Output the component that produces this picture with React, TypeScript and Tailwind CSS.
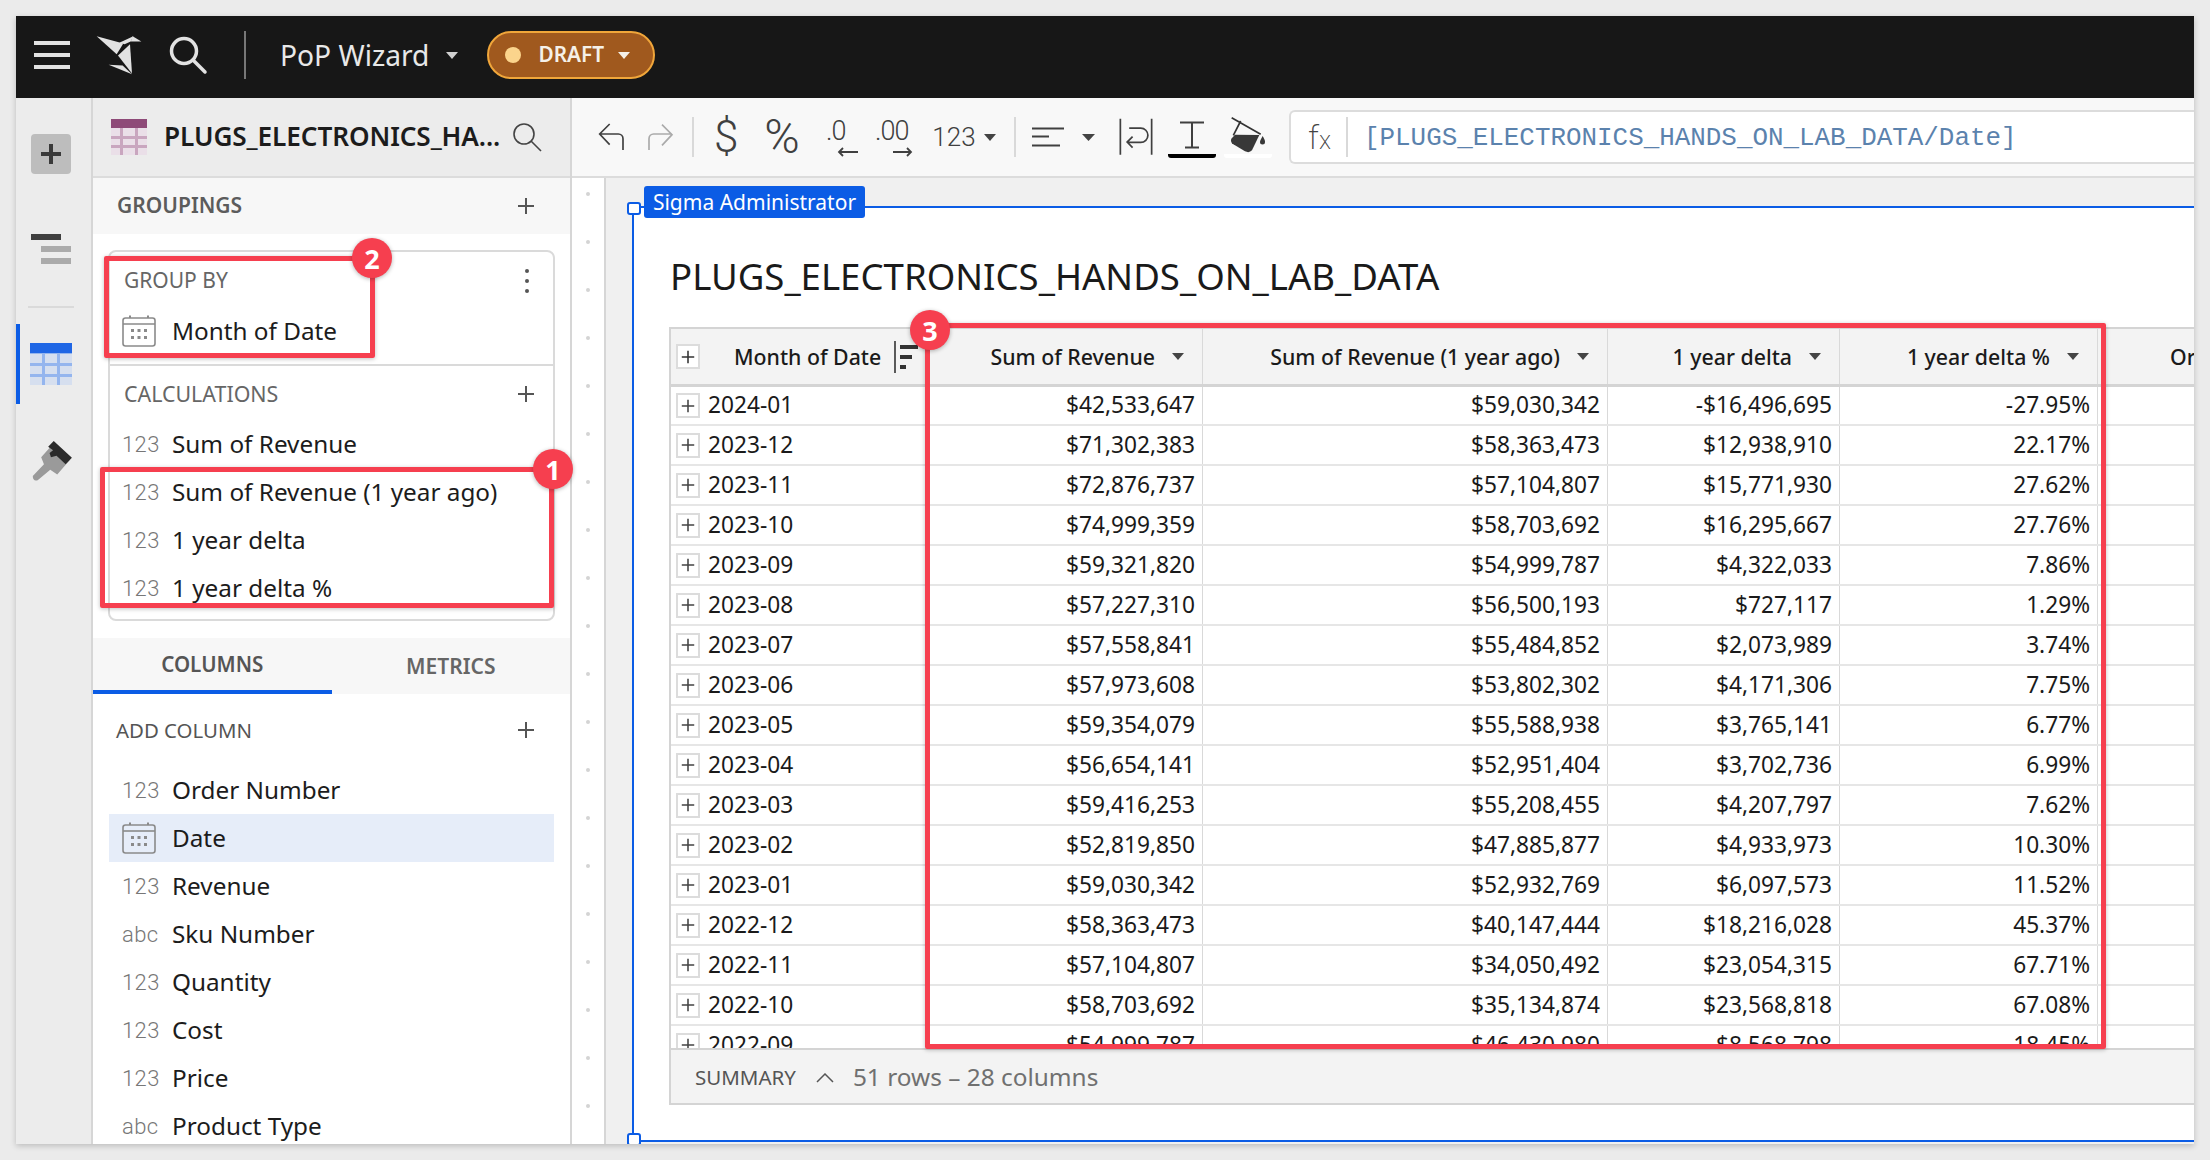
import React from "react";

const FONT = "[font-family:'Noto_Sans',sans-serif]";

const rows: [string, string, string, string, string][] = [
  ["2024-01", "$42,533,647", "$59,030,342", "-$16,496,695", "-27.95%"],
  ["2023-12", "$71,302,383", "$58,363,473", "$12,938,910", "22.17%"],
  ["2023-11", "$72,876,737", "$57,104,807", "$15,771,930", "27.62%"],
  ["2023-10", "$74,999,359", "$58,703,692", "$16,295,667", "27.76%"],
  ["2023-09", "$59,321,820", "$54,999,787", "$4,322,033", "7.86%"],
  ["2023-08", "$57,227,310", "$56,500,193", "$727,117", "1.29%"],
  ["2023-07", "$57,558,841", "$55,484,852", "$2,073,989", "3.74%"],
  ["2023-06", "$57,973,608", "$53,802,302", "$4,171,306", "7.75%"],
  ["2023-05", "$59,354,079", "$55,588,938", "$3,765,141", "6.77%"],
  ["2023-04", "$56,654,141", "$52,951,404", "$3,702,736", "6.99%"],
  ["2023-03", "$59,416,253", "$55,208,455", "$4,207,797", "7.62%"],
  ["2023-02", "$52,819,850", "$47,885,877", "$4,933,973", "10.30%"],
  ["2023-01", "$59,030,342", "$52,932,769", "$6,097,573", "11.52%"],
  ["2022-12", "$58,363,473", "$40,147,444", "$18,216,028", "45.37%"],
  ["2022-11", "$57,104,807", "$34,050,492", "$23,054,315", "67.71%"],
  ["2022-10", "$58,703,692", "$35,134,874", "$23,568,818", "67.08%"],
  ["2022-09", "$54,999,787", "$46,430,980", "$8,568,798", "18.45%"],
];

function Plus({ size = 18, color = "#444" }: { size?: number; color?: string }) {
  return (
    <svg width={size} height={size} viewBox="0 0 18 18" className="shrink-0">
      <path d="M9 1V17M1 9H17" stroke={color} strokeWidth="2" fill="none" />
    </svg>
  );
}

function Caret({ w = 12, h = 7, color = "#444" }: { w?: number; h?: number; color?: string }) {
  return (
    <svg width={w} height={h} viewBox="0 0 12 7" className="shrink-0" preserveAspectRatio="none">
      <path d="M0 0H12L6 7Z" fill={color} />
    </svg>
  );
}

function Calendar() {
  return (
    <svg width="34" height="32" viewBox="0 0 34 32" className="shrink-0">
      <rect x="1" y="3" width="32" height="28" rx="2.5" fill="none" stroke="#8a8a8a" strokeWidth="1.6" />
      <path d="M1 9H33" stroke="#8a8a8a" strokeWidth="1.6" />
      <path d="M8 0.5V3M26 0.5V3" stroke="#8a8a8a" strokeWidth="2" />
      <g fill="#8a8a8a">
        <rect x="9" y="14" width="3" height="3" />
        <rect x="15.5" y="14" width="3" height="3" />
        <rect x="22" y="14" width="3" height="3" />
        <rect x="9" y="21" width="3" height="3" />
        <rect x="15.5" y="21" width="3" height="3" />
        <rect x="22" y="21" width="3" height="3" />
      </g>
    </svg>
  );
}

function FieldRow({ kind, label, active, icon }: { kind?: string; label: string; active?: boolean; icon?: boolean }) {
  return (
    <div className={`flex h-[48px] shrink-0 items-center pl-[13px] ${active ? "bg-[#e6edf9]" : ""}`}>
      <div className="flex w-[50px] shrink-0 items-center">
        {icon ? (
          <Calendar />
        ) : (
          <span className="font-['Roboto'] text-[22px] font-light tracking-[0.4px] text-[#777]">{kind}</span>
        )}
      </div>
      <span className="text-[24.3px] whitespace-nowrap text-[#1c1c1c]">{label}</span>
    </div>
  );
}

function RedBox({ className }: { className: string }) {
  return <div className={`absolute rounded-[2px] border-[5px] border-[#f63f4f] shadow-[0_1px_4px_rgba(0,0,0,0.25)] ${className}`} />;
}

function RedBadge({ n, className }: { n: number; className: string }) {
  return (
    <div
      className={`absolute flex h-[40px] w-[40px] items-center justify-center rounded-full bg-[#f63f4f] text-[27px] leading-none font-bold text-white shadow-[0_1px_4px_rgba(0,0,0,0.3)] ${className}`}
    >
      {n}
    </div>
  );
}

function Row({ r, first }: { r: string[]; first: boolean }) {
  return (
    <div className={`flex shrink-0 border-b-2 border-[#e6e6e6] text-[22.7px] text-[#1a1a1a] ${first ? "h-[39px]" : "h-[40px]"}`}>
      <div className="flex w-[256px] shrink-0 items-center pl-[5px]">
        <div className="flex h-[25px] w-[24px] shrink-0 items-center justify-center border-2 border-[#dcdcdc]">
          <Plus size={14} />
        </div>
        <span className="ml-[8px]">{r[0]}</span>
      </div>
      <div className="flex w-[276px] shrink-0 items-center justify-end border-r border-[#d9d9d9] pr-[7px]">{r[1]}</div>
      <div className="flex w-[405px] shrink-0 items-center justify-end border-r border-[#d9d9d9] pr-[7px]">{r[2]}</div>
      <div className="flex w-[232px] shrink-0 items-center justify-end border-r border-[#d9d9d9] pr-[7px]">{r[3]}</div>
      <div className="flex w-[258px] shrink-0 items-center justify-end border-r border-[#d9d9d9] pr-[7px]">{r[4]}</div>
    </div>
  );
}

function HeadCell({ label, w }: { label: string; w: string }) {
  return (
    <div className={`flex shrink-0 items-center justify-end border-r border-[#d9d9d9] pr-[18px] ${w}`}>
      <span className="text-[21.3px] font-medium whitespace-nowrap text-[#1a1a1a]">{label}</span>
      <span className="ml-[17px]">
        <Caret color="#444" />
      </span>
    </div>
  );
}

export default function App() {
  return (
    <div className={`relative h-[1160px] w-[2210px] overflow-hidden bg-[#ebebeb] p-[16px] ${FONT}`}>
      <div className="flex h-[1128px] w-[2178px] flex-col overflow-hidden bg-white shadow-[0_2px_6px_rgba(0,0,0,0.2)]">
        {/* Top bar */}
        <div className="flex h-[82px] shrink-0 items-center bg-[#171717] pb-[4px]">
          <div className="ml-[18px] flex h-[28px] w-[36px] flex-col justify-between">
            <div className="h-[4px] bg-[#e2e2e2]" />
            <div className="h-[4px] bg-[#e2e2e2]" />
            <div className="h-[4px] bg-[#e2e2e2]" />
          </div>
          <svg className="ml-[24px] shrink-0" width="50" height="42" viewBox="220 40 150 125">
            <g fill="#e2e2e2">
              <path d="M228 46L308 68L288 100Z" />
              <path d="M296 66L338 46L330 62L312 70Z" />
              <path d="M336 46L362 62L330 62Z" />
              <path d="M292 104L328 70L334 158Z" />
              <path d="M264 132L306 134L334 160Z" />
            </g>
          </svg>
          <svg className="ml-[24px] shrink-0" width="40" height="40" viewBox="0 0 40 40">
            <circle cx="16" cy="16" r="12.5" fill="none" stroke="#e2e2e2" strokeWidth="3.5" />
            <path d="M25.5 25.5L37 37" stroke="#e2e2e2" strokeWidth="3.5" strokeLinecap="round" />
          </svg>
          <div className="ml-[36px] h-[48px] w-[2px] bg-[#777]" />
          <span className="ml-[34px] text-[28.2px] leading-none text-[#e8e8e8]">PoP Wizard</span>
          <span className="ml-[17px]">
            <Caret color="#d0d0d0" />
          </span>
          <div className="ml-[29px] flex h-[48px] w-[168px] items-center rounded-full border-2 border-[#f0a63a] bg-[#a0591e] pl-[16px]">
            <div className="h-[16px] w-[16px] rounded-full bg-[#fbd48c]" />
            <span className="ml-[17px] text-[20.8px] font-semibold text-[#f5f0e8]">DRAFT</span>
            <span className="ml-[14px]">
              <Caret color="#f5f0e8" />
            </span>
          </div>
        </div>

        <div className="flex min-h-0 flex-1">
          {/* Rail */}
          <div className="flex w-[75px] shrink-0 flex-col bg-[#ececec]">
            <div className="mt-[36px] ml-[15px] flex h-[40px] w-[40px] items-center justify-center rounded-[4px] bg-[#bdbdbd]">
              <svg width="22" height="22" viewBox="0 0 22 22">
                <path d="M11 1V21M1 11H21" stroke="#3a3a3a" strokeWidth="4" />
              </svg>
            </div>
            <div className="mt-[60px] ml-[15px] flex w-[40px] flex-col items-end gap-[6px]">
              <div className="h-[6px] w-[30px] self-start bg-[#3f3f3f]" />
              <div className="h-[6px] w-[30px] bg-[#aaaaaa]" />
              <div className="h-[6px] w-[30px] bg-[#aaaaaa]" />
            </div>
            <div className="mt-[42px] ml-[12px] h-[2px] w-[46px] bg-[#dadada]" />
            <div className="mt-[16px] flex h-[80px] items-center border-l-4 border-[#0b5ce5] pl-[10px]">
              <svg width="42" height="42" viewBox="0 0 42 42">
                <rect width="42" height="42" fill="#d6dfef" />
                <rect width="42" height="10" fill="#1f66e5" />
                <rect y="10" width="42" height="1" fill="#94b5ee" />
                <rect x="12" y="10" width="3" height="32" fill="#94b5ee" />
                <rect x="27" y="10" width="3" height="32" fill="#94b5ee" />
                <rect y="20" width="42" height="3" fill="#94b5ee" />
                <rect y="31" width="42" height="3" fill="#94b5ee" />
              </svg>
            </div>
            <svg className="mt-[34px] ml-[14px]" width="44" height="46" viewBox="30 360 126 126">
              <path d="M62 412L98 372L144 420L108 462L88 448L52 478Q38 482 38 466L70 432Z" fill="#9a9a9a" />
              <path d="M98 366L150 414L132 432L106 408L90 412L86 400L96 392L82 382Z" fill="#2b2b2b" />
            </svg>
          </div>

          {/* Panel */}
          <div className="flex w-[481px] shrink-0 flex-col overflow-hidden border-x-2 border-[#d6d6d6] bg-white">
            <div className="flex h-[80px] shrink-0 items-center border-b-2 border-[#dcdcdc] bg-[#ececec] pl-[18px]">
              <svg width="36" height="36" viewBox="0 0 36 36" className="shrink-0">
                <rect width="36" height="36" fill="#eadfe8" />
                <rect width="36" height="9" fill="#8e4a78" />
                <rect y="17" width="36" height="3" fill="#c9a6bf" />
                <rect y="26" width="36" height="3" fill="#c9a6bf" />
                <rect x="9" y="9" width="3" height="27" fill="#c9a6bf" />
                <rect x="24" y="9" width="3" height="27" fill="#c9a6bf" />
              </svg>
              <span className="ml-[17px] w-[340px] overflow-hidden text-[26.2px] font-semibold tracking-[-0.1px] whitespace-nowrap text-[#1c1c1c]">
                PLUGS_ELECTRONICS_HA...
              </span>
              <svg className="ml-[8px] shrink-0" width="30" height="30" viewBox="0 0 30 30">
                <circle cx="12" cy="12" r="10" fill="none" stroke="#444" strokeWidth="1.6" />
                <path d="M19 19L29 29" stroke="#444" strokeWidth="1.6" />
              </svg>
            </div>
            <div className="flex h-[56px] shrink-0 items-center justify-between bg-[#f7f7f7] pr-[35px] pl-[24px]">
              <span className="text-[21px] font-semibold text-[#5c5c5c]">GROUPINGS</span>
              <Plus size={18} color="#555" />
            </div>
            <div className="mx-[15px] mt-[16px] h-[371px] shrink-0 overflow-hidden rounded-[8px] border-2 border-[#dadada]">
              <div className="h-[114px] border-b-2 border-[#dadada] pt-[16px]">
                <div className="flex h-[26px] items-center justify-between pr-[24px] pl-[14px]">
                  <span className="text-[21px] text-[#666]">GROUP BY</span>
                  <svg width="4" height="24" viewBox="0 0 4 24">
                    <circle cx="2" cy="2" r="2" fill="#555" />
                    <circle cx="2" cy="12" r="2" fill="#555" />
                    <circle cx="2" cy="22" r="2" fill="#555" />
                  </svg>
                </div>
                <div className="mt-[13px] -ml-[1px]">
                  <FieldRow label="Month of Date" icon />
                </div>
              </div>
              <div className="flex h-[54px] items-center justify-between pt-[2px] pr-[18px] pl-[14px]">
                <span className="text-[21.4px] text-[#666]">CALCULATIONS</span>
                <Plus size={18} color="#555" />
              </div>
              <div className="-mx-[1px] flex flex-col">
                <FieldRow kind="123" label="Sum of Revenue" />
                <FieldRow kind="123" label="Sum of Revenue (1 year ago)" />
                <FieldRow kind="123" label="1 year delta" />
                <FieldRow kind="123" label="1 year delta %" />
              </div>
            </div>
            <div className="mt-[17px] flex h-[56px] shrink-0 bg-[#f7f7f7]">
              <div className="flex w-[240px] items-center justify-center border-b-4 border-[#0b5ce5]">
                <span className="text-[20.6px] font-semibold text-[#555]">COLUMNS</span>
              </div>
              <div className="flex w-[240px] items-center justify-center pt-[2px]">
                <span className="text-[21px] font-semibold text-[#666]">METRICS</span>
              </div>
            </div>
            <div className="flex h-[72px] shrink-0 items-center justify-between pr-[35px] pl-[23px]">
              <span className="text-[20.4px] text-[#555]">ADD COLUMN</span>
              <Plus size={18} color="#555" />
            </div>
            <div className="mx-[16px] flex flex-col">
              <FieldRow kind="123" label="Order Number" />
              <FieldRow label="Date" icon active />
              <FieldRow kind="123" label="Revenue" />
              <FieldRow kind="abc" label="Sku Number" />
              <FieldRow kind="123" label="Quantity" />
              <FieldRow kind="123" label="Cost" />
              <FieldRow kind="123" label="Price" />
              <FieldRow kind="abc" label="Product Type" />
            </div>
          </div>

          {/* Main */}
          <div className="flex min-w-0 flex-1 flex-col">
            {/* Toolbar */}
            <div className="flex h-[80px] shrink-0 items-center border-b-2 border-[#dcdcdc] bg-[#f8f8f8] pl-[26px] text-[#404040]">
              <svg width="28" height="28" viewBox="25 55 84 84" className="shrink-0">
                <path d="M100 136V102a14 14 0 0 0-14-14H30M60 58L30 88L60 120" fill="none" stroke="#404040" strokeWidth="5" />
              </svg>
              <svg className="ml-[21px] shrink-0" width="28" height="28" viewBox="170 55 84 84">
                <path d="M176 136V102a14 14 0 0 1 14-14H245M215 60L245 90L215 122" fill="none" stroke="#aaaaaa" strokeWidth="5" />
              </svg>
              <div className="ml-[17px] h-[40px] w-[2px] bg-[#d9d9d9]" />
              <span className="ml-[20px] w-[24px] text-center font-['Roboto'] text-[44px] leading-none font-light">$</span>
              <span className="ml-[24px] w-[40px] text-center font-['Roboto'] text-[48px] leading-none font-light">%</span>
              <div className="ml-[24px] flex w-[36px] shrink-0 flex-col">
                <span className="h-[27px] font-['Roboto'] text-[27px] leading-[27px] font-light tracking-[-1px]">.0</span>
                <svg className="mt-[2px] ml-[11px]" width="21" height="10" viewBox="0 0 21 10">
                  <path d="M21 5H2M6 1L2 5L6 9" fill="none" stroke="#404040" strokeWidth="1.8" />
                </svg>
              </div>
              <div className="ml-[13px] flex w-[42px] shrink-0 flex-col">
                <span className="h-[27px] font-['Roboto'] text-[27px] leading-[27px] font-light tracking-[-1px]">.00</span>
                <svg className="mt-[2px] ml-[18px]" width="20" height="10" viewBox="0 0 20 10">
                  <path d="M0 5H18M14 1L18 5L14 9" fill="none" stroke="#404040" strokeWidth="1.8" />
                </svg>
              </div>
              <span className="ml-[13px] w-[48px] text-center font-['Roboto'] text-[26px] leading-none font-light">123</span>
              <span className="ml-[6px]">
                <Caret color="#444" />
              </span>
              <div className="ml-[18px] h-[40px] w-[2px] bg-[#d9d9d9]" />
              <svg className="ml-[16px] shrink-0" width="32" height="20" viewBox="0 0 32 20">
                <path d="M0 1.5H32M0 9.5H17M0 18.5H28" stroke="#404040" strokeWidth="2" />
              </svg>
              <span className="ml-[18px]">
                <Caret w={13} color="#444" />
              </span>
              <svg className="ml-[24px] shrink-0" width="34" height="38" viewBox="388 42 100 108">
                <path d="M392 42V148M484 42V148" stroke="#404040" strokeWidth="5" fill="none" />
                <path d="M418 70H452a21 21 0 0 1 0 42H412M428 95L412 111L428 127" stroke="#404040" strokeWidth="5" fill="none" />
              </svg>
              <div className="ml-[15px] flex w-[48px] shrink-0 flex-col items-center pt-[5px]">
                <svg width="26" height="28" viewBox="0 0 26 28">
                  <path d="M1 1.5H25M13 1.5V26.5M6 26.5H20" stroke="#404040" strokeWidth="2" fill="none" />
                </svg>
                <div className="mt-[5px] h-[4px] w-[48px] rounded-b-[3px] bg-black" />
              </div>
              <div className="ml-[8px] flex w-[48px] shrink-0 flex-col items-center">
                <svg width="36" height="38" viewBox="720 40 108 114">
                  <path d="M725 45L812 95M752 55L730 98" stroke="#333" strokeWidth="5" fill="none" />
                  <path d="M735 96L808 97L786 143Q778 152 765 146L730 125Q720 118 724 108Z" fill="#383838" />
                  <path d="M818 100Q826 114 825 118A7.5 7.5 0 0 1 810 118Q810 114 818 100Z" fill="#383838" />
                </svg>
                <div className="mt-[0px] h-[4px] w-[48px] rounded-b-[3px] bg-white" />
              </div>
              <div className="ml-[17px] flex h-[54px] min-w-0 flex-1 items-center rounded-l-[6px] border-y-2 border-l-2 border-[#dcdcdc] bg-white">
                <span className="ml-[17px] w-[38px] font-['Roboto'] text-[34px] leading-none font-extralight text-[#444]">
                  f<span className="text-[25px]">x</span>
                </span>
                <div className="ml-[0px] h-[40px] w-[2px] bg-[#d9d9d9]" />
                <span className="ml-[16px] pt-[4px] font-['Liberation_Mono'] text-[25.9px] leading-none whitespace-nowrap text-[#5b82ad]">
                  [PLUGS_ELECTRONICS_HANDS_ON_LAB_DATA/Date]
                </span>
              </div>
            </div>

            {/* Canvas */}
            <div className="flex min-h-0 flex-1">
              <div className="flex w-[32px] shrink-0 flex-col items-center gap-[44px] overflow-hidden bg-white pt-[14px]">
                {Array.from({ length: 21 }).map((_, i) => (
                  <div key={i} className="h-[4px] w-[4px] shrink-0 rounded-full bg-[#d4d4d4]" />
                ))}
              </div>
              <div className="flex min-w-0 flex-1 flex-col border-l-2 border-[#d6d6d6] bg-[#f0f0f0] pt-[28px] pb-[2px] pl-[26px]">
                <div className="relative flex min-h-0 flex-1 flex-col border-y-2 border-l-2 border-[#0b5ce5] bg-white">
                  <div className="absolute -top-[22px] left-[10px] flex h-[32px] w-[221px] items-center justify-center rounded-[3px] bg-[#0b5ce5] text-[21px] leading-none text-white">
                    Sigma Administrator
                  </div>
                  <div className="absolute -top-[6px] -left-[7px] h-[13px] w-[14px] rounded-[3px] border-2 border-[#0b5ce5] bg-white" />
                  <div className="absolute -bottom-[6px] -left-[7px] h-[13px] w-[14px] rounded-[3px] border-2 border-[#0b5ce5] bg-white" />
                  <div className="flex h-[119px] shrink-0 items-center pt-[18px] pl-[36px] text-[36.6px] leading-none text-[#1a1a1a]">
                    PLUGS_ELECTRONICS_HANDS_ON_LAB_DATA
                  </div>
                  <div className="ml-[35px] flex h-[778px] shrink-0 flex-col overflow-hidden border-y-2 border-l-2 border-[#d4d4d4]">
                    <div className="flex h-[58px] shrink-0 border-b-[3px] border-[#d4d4d4] bg-[#f3f3f3]">
                      <div className="flex w-[256px] shrink-0 items-center pl-[5px]">
                        <div className="flex h-[25px] w-[24px] shrink-0 items-center justify-center border-2 border-[#dcdcdc] bg-white">
                          <Plus size={14} color="#333" />
                        </div>
                        <span className="ml-[34px] text-[21.3px] font-medium whitespace-nowrap text-[#1a1a1a]">Month of Date</span>
                        <svg className="ml-[13px] shrink-0" width="26" height="32" viewBox="0 0 26 32">
                          <path d="M1 0V32" stroke="#333" strokeWidth="1.6" />
                          <rect x="6" y="4" width="18" height="4" fill="#333" />
                          <rect x="6" y="14" width="12" height="4" fill="#333" />
                          <rect x="6" y="24" width="6" height="4" fill="#333" />
                        </svg>
                      </div>
                      <HeadCell label="Sum of Revenue" w="w-[276px]" />
                      <HeadCell label="Sum of Revenue (1 year ago)" w="w-[405px]" />
                      <HeadCell label="1 year delta" w="w-[232px]" />
                      <HeadCell label="1 year delta %" w="w-[258px]" />
                      <div className="flex flex-1 items-center overflow-hidden pl-[72px]">
                        <span className="text-[21.3px] font-medium text-[#1a1a1a]">Or</span>
                      </div>
                    </div>
                    <div className="flex min-h-0 flex-1 flex-col overflow-hidden">
                      {rows.map((r, i) => (
                        <Row key={r[0]} r={r} first={i === 0} />
                      ))}
                    </div>
                    <div className="flex h-[55px] shrink-0 items-center border-t-2 border-[#d4d4d4] bg-[#f3f3f3] pt-[2px] pl-[24px]">
                      <span className="text-[20.5px] text-[#555]">SUMMARY</span>
                      <svg className="ml-[20px] shrink-0" width="18" height="10" viewBox="0 0 18 10">
                        <path d="M1 9L9 1L17 9" fill="none" stroke="#555" strokeWidth="1.5" />
                      </svg>
                      <span className="ml-[19px] text-[24.4px] text-[#707070]">51 rows – 28 columns</span>
                    </div>
                  </div>
                </div>
              </div>
            </div>
          </div>
        </div>
      </div>

      <RedBox className="top-[256px] left-[104px] h-[102px] w-[271px]" />
      <RedBox className="top-[467px] left-[100px] h-[141px] w-[454px]" />
      <RedBox className="top-[323px] left-[925px] h-[726px] w-[1181px]" />
      <RedBadge n={2} className="top-[238px] left-[352px]" />
      <RedBadge n={1} className="top-[449px] left-[533px]" />
      <RedBadge n={3} className="top-[310px] left-[910px]" />
    </div>
  );
}
